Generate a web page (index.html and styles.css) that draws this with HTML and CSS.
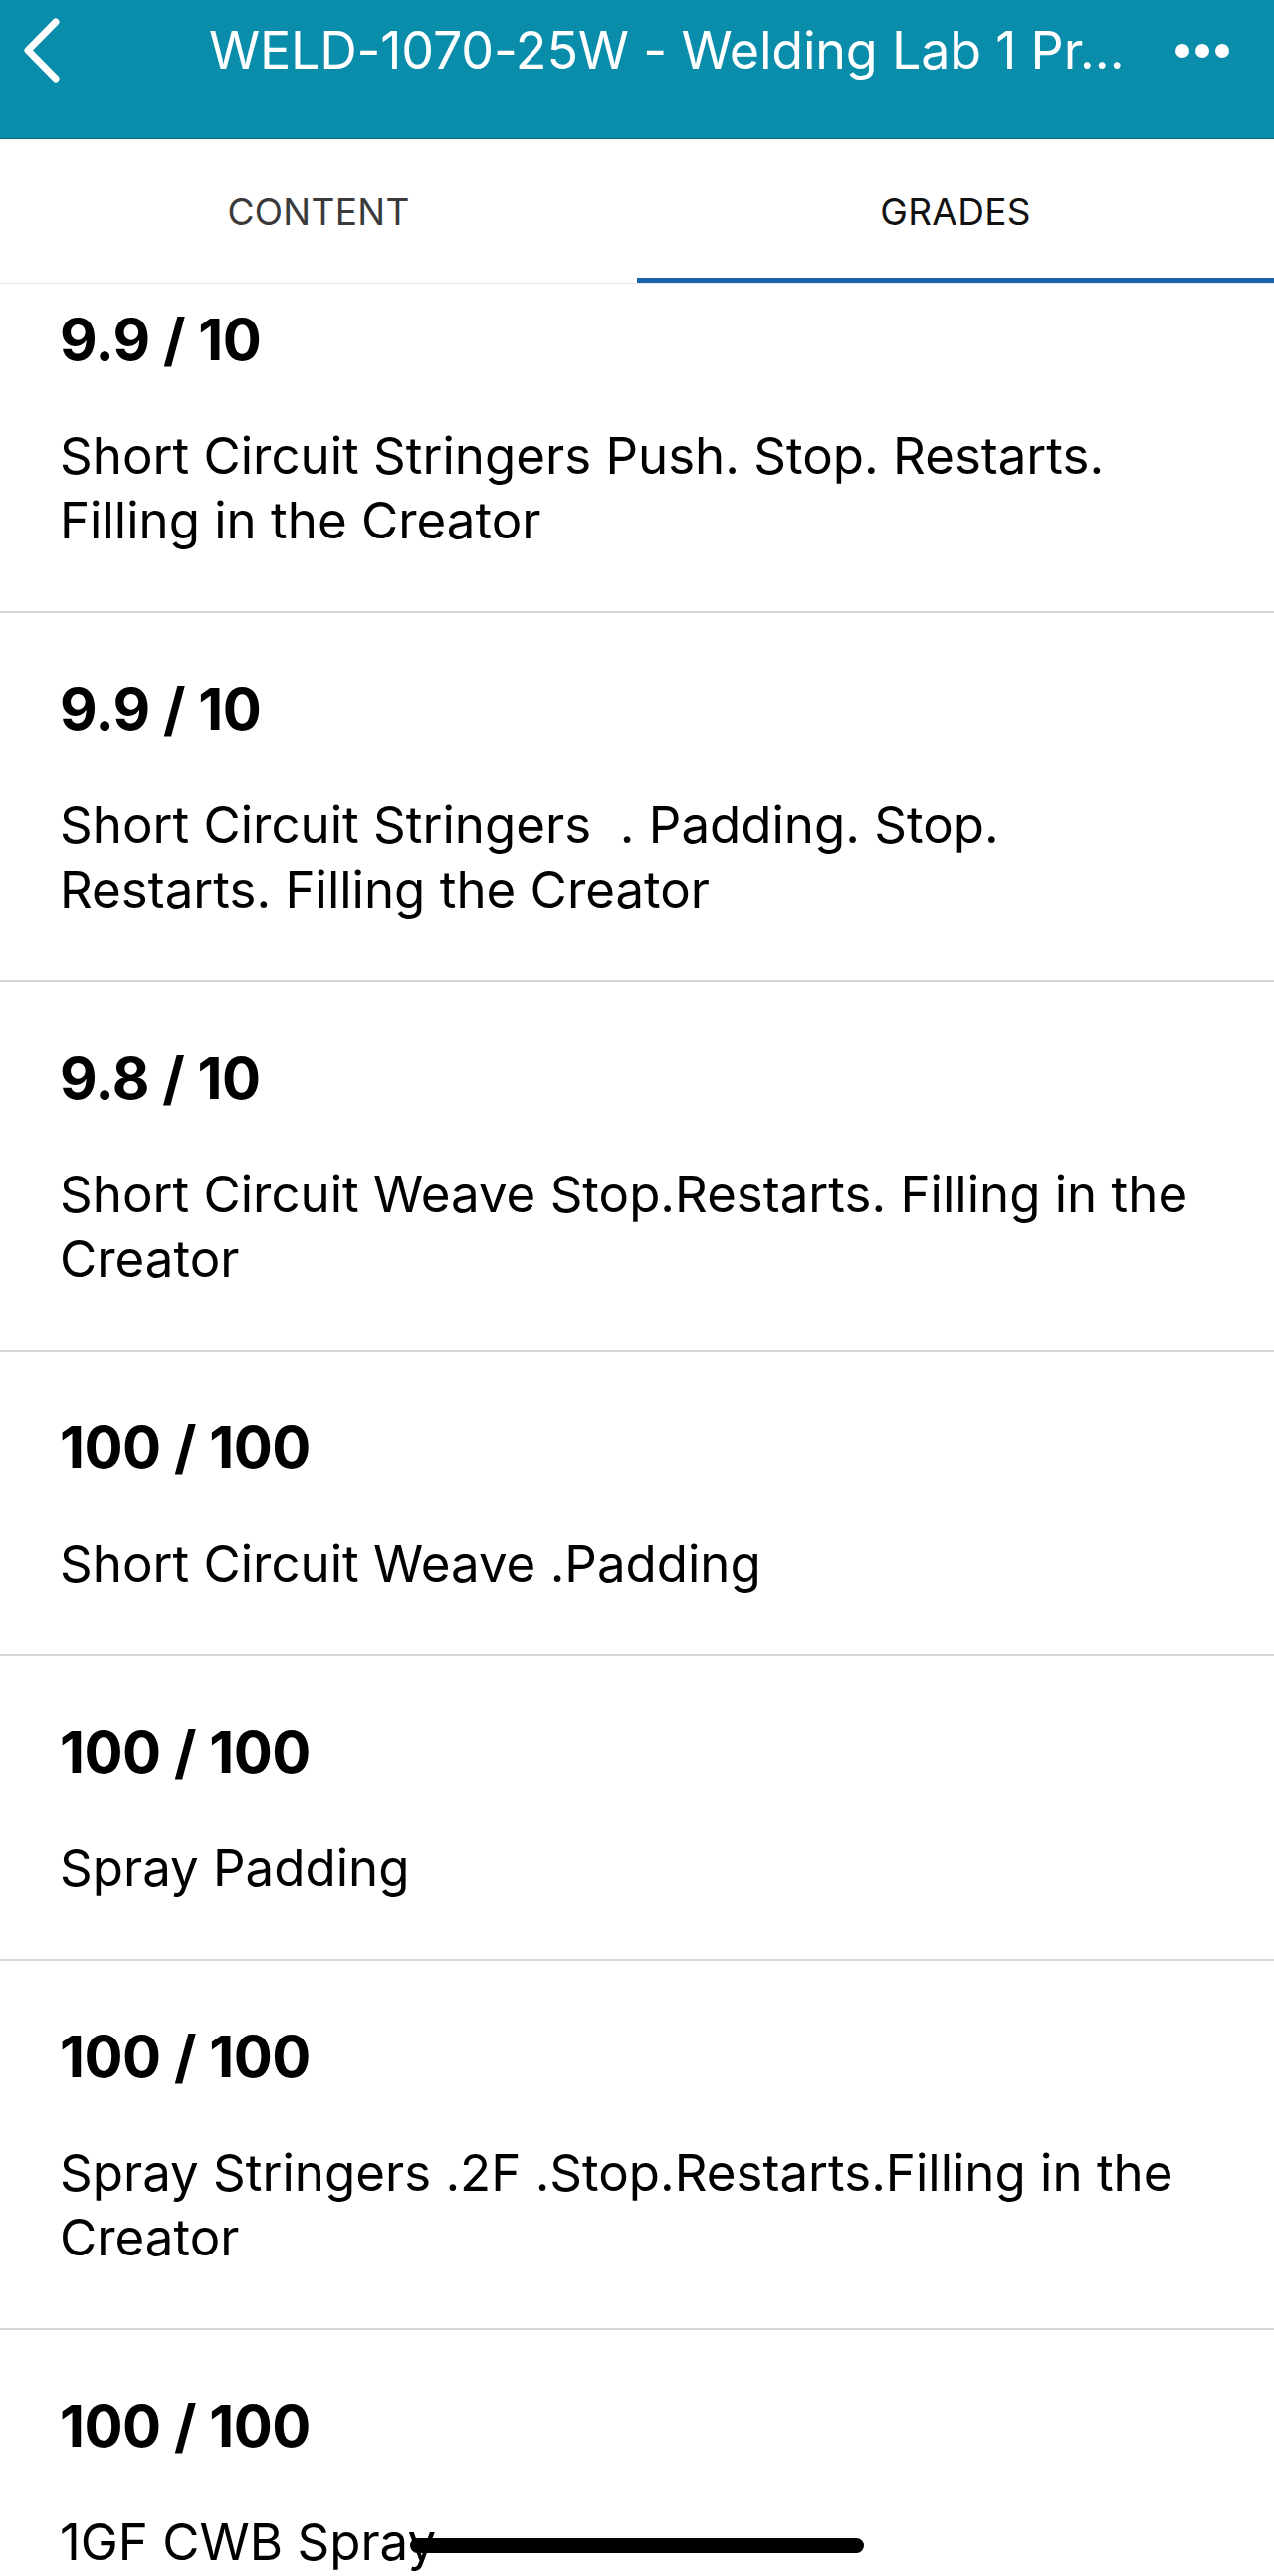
FILE: index.html
```html
<!DOCTYPE html>
<html lang="en">
<head>
  <meta charset="UTF-8">
  <title>Grades</title>
  <meta name="viewport" content="width=device-width, initial-scale=1.0">
  <link rel="stylesheet" href="styles.css">
</head>
<body>

<div class="app">
  <header class="top-bar">
    <div class="top-row">
      <button class="back-btn" aria-label="Back">
        <svg width="40" height="66" viewBox="0 0 40 66">
          <path d="M33 4 L5 32.5 L33 61" fill="none" stroke="#fff" stroke-width="7" stroke-linecap="round" stroke-linejoin="round"/>
        </svg>
      </button>
      <h1 class="title">WELD-1070-25W - Welding Lab 1 Pr…</h1>
      <button class="more-btn" aria-label="More">
        <span class="dot"></span><span class="dot"></span><span class="dot"></span>
      </button>
    </div>
  </header>

  <nav class="tabs">
    <div class="tab">CONTENT</div>
    <div class="tab active">GRADES</div>
  </nav>

  <div class="scroll-area">
    <ul class="grade-list">
      <li class="grade-item">
        <div class="score">9.9 / 10</div>
        <div class="desc">Short Circuit Stringers Push. Stop. Restarts. Filling in the Creator</div>
      </li>
      <li class="grade-item">
        <div class="score">9.9 / 10</div>
        <div class="desc">Short Circuit Stringers &nbsp;. Padding. Stop. Restarts. Filling the Creator</div>
      </li>
      <li class="grade-item">
        <div class="score">9.8 / 10</div>
        <div class="desc">Short Circuit Weave Stop.Restarts. Filling in the Creator</div>
      </li>
      <li class="grade-item">
        <div class="score">100 / 100</div>
        <div class="desc">Short Circuit Weave .Padding</div>
      </li>
      <li class="grade-item">
        <div class="score">100 / 100</div>
        <div class="desc">Spray Padding</div>
      </li>
      <li class="grade-item">
        <div class="score">100 / 100</div>
        <div class="desc">Spray Stringers .2F .Stop.Restarts.Filling in the Creator</div>
      </li>
      <li class="grade-item">
        <div class="score">100 / 100</div>
        <div class="desc">1GF CWB Spray</div>
      </li>
    </ul>
  </div>

  <div class="home-indicator"></div>
</div>

</body>
</html>
```

FILE: styles.css
```css
* { box-sizing: border-box; }
html, body { margin: 0; padding: 0; }
body { font-family: Inter, "Liberation Sans", Arial, sans-serif; background: #fff; color: #000; overflow: hidden; }

.app { position: relative; width: 1280px; height: 2588px; display: flex; flex-direction: column; overflow: hidden; }

/* header */
.top-bar { height: 140px; background: #0a8dab; border-bottom: 1px solid #0b6f87; flex-shrink: 0; }
.top-row { height: 101px; display: flex; align-items: center; padding: 0 45px 0 23px; }
.back-btn { background: none; border: 0; padding: 0; width: 40px; height: 66px; display: flex; cursor: pointer; }
.title { flex: 1; margin: 0 0 0 147px; font-size: 52px; font-weight: 400; color: #fff; white-space: nowrap; overflow: hidden; letter-spacing: -0.2px; }
.more-btn { background: none; border: 0; padding: 0; display: flex; gap: 6px; cursor: pointer; }
.dot { width: 14px; height: 14px; border-radius: 50%; background: #fff; }

/* tabs */
.tabs { display: flex; height: 145px; border-bottom: 1px solid #e6e6e6; flex-shrink: 0; background: #fff; position: relative; z-index: 1; }
.tab { flex: 1; display: flex; align-items: center; justify-content: center; font-size: 37px; color: #3a3a3a; letter-spacing: 0.3px; border-bottom: 5px solid transparent; padding-top: 5px; }
.tab.active { color: #111; border-bottom-color: #1b62ad; }

/* grades list */
.scroll-area { flex: 1; overflow: hidden; }
.grade-list { list-style: none; margin: -40px 0 0; padding: 0; }
.grade-item { padding: 61px 63px 59px 60px; border-bottom: 2px solid #d3d6da; }
.score { font-size: 58px; line-height: 70px; font-weight: 700; letter-spacing: -0.5px; }
.desc { margin-top: 49px; font-size: 51px; line-height: 65px; }

.home-indicator { position: absolute; left: 412px; bottom: 23px; width: 456px; height: 15px; border-radius: 8px; background: #000; }
```
